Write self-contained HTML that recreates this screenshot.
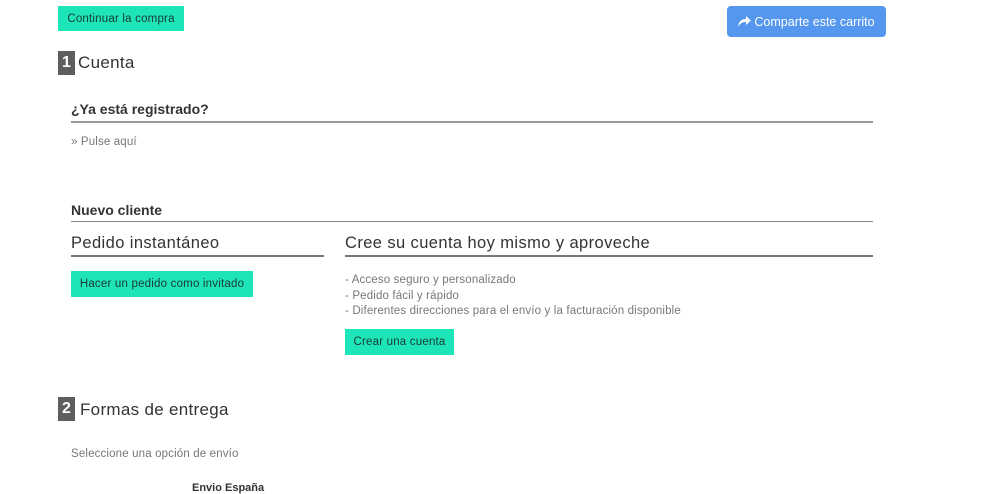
<!DOCTYPE html>
<html><head><meta charset="utf-8"><style>
*{margin:0;padding:0;box-sizing:border-box}
body{width:1000px;height:490px;overflow:hidden;background:#fff;font-family:"Liberation Sans",sans-serif;color:#333;position:relative}
.a{position:absolute}
.btn{background:#1de5b7;color:#1a3a33;font-size:11.5px;display:flex;align-items:center;justify-content:center;letter-spacing:0.2px}
.num{background:#5e5e5e;color:#fff;font-weight:bold;font-size:16px;width:17px;height:24px;display:flex;align-items:center;justify-content:center}
.h{font-size:17px;color:#333;letter-spacing:0.3px}
.line{height:2px;background:#777}
.s{font-size:11.5px;color:#777;letter-spacing:0.15px}
</style></head><body>
<div class="a btn" style="left:58px;top:6px;width:126px;height:25px">Continuar la compra</div>
<div class="a" style="left:727px;top:6px;width:159px;height:31px;background:#5596ee;border-radius:4px;color:#fff;font-size:12.5px;display:flex;align-items:center;justify-content:center">
<svg width="13" height="11" viewBox="0 0 13 11" style="margin-right:3px"><path d="M8 0 L13 4.5 L8 9 V6 C4 6 2 7.5 0 11 C0.5 6 3 3 8 3 Z" fill="#fff"/></svg>Comparte este carrito</div>
<div class="a num" style="left:58px;top:51px">1</div>
<div class="a h" style="left:78px;top:53px">Cuenta</div>
<div class="a" style="left:71px;top:101px;font-size:14px;font-weight:bold;color:#333">¿Ya está registrado?</div>
<div class="a line" style="left:71px;top:121px;width:802px;height:2px;background:#999"></div>
<div class="a s" style="left:71px;top:136px">» Pulse aquí</div>
<div class="a" style="left:71px;top:202px;font-size:14px;font-weight:bold;color:#333">Nuevo cliente</div>
<div class="a" style="left:71px;top:221px;width:802px;height:1px;background:#888"></div>
<div class="a" style="left:71px;top:234px;font-size:16.5px;color:#333;letter-spacing:0.4px">Pedido instantáneo</div>
<div class="a line" style="left:71px;top:255px;width:253px"></div>
<div class="a" style="left:345px;top:234px;font-size:16.5px;color:#333;letter-spacing:0.4px">Cree su cuenta hoy mismo y aproveche</div>
<div class="a line" style="left:345px;top:255px;width:528px"></div>
<div class="a btn" style="left:71px;top:271px;width:182px;height:26px">Hacer un pedido como invitado</div>
<div class="a s" style="left:345px;top:273px;line-height:15.5px">- Acceso seguro y personalizado<br>- Pedido fácil y rápido<br>- Diferentes direcciones para el envío y la facturación disponible</div>
<div class="a btn" style="left:345px;top:329px;width:109px;height:26px">Crear una cuenta</div>
<div class="a num" style="left:58px;top:397px">2</div>
<div class="a h" style="left:80px;top:400px">Formas de entrega</div>
<div class="a s" style="left:71px;top:448px">Seleccione una opción de envío</div>
<div class="a" style="left:192px;top:482px;font-size:11px;font-weight:bold;color:#333">Envio España</div>
</body></html>
